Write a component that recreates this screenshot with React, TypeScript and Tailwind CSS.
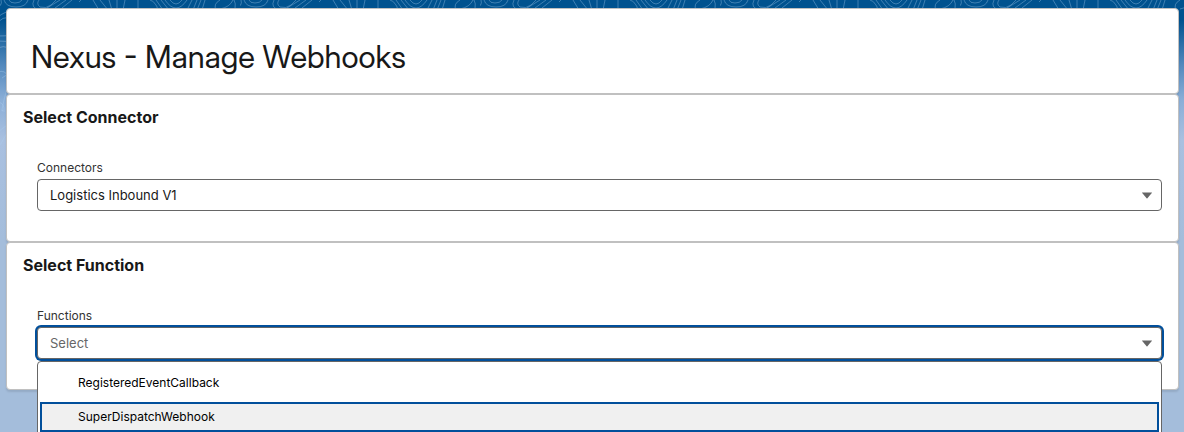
import { useState } from 'react'

const connectors = ['Logistics Inbound V1']
const functions = ['RegisteredEventCallback', 'SuperDispatchWebhook']

function Caret() {
  return (
    <svg viewBox="0 0 10 6" className="pointer-events-none absolute right-[10px] top-1/2 -mt-[3px] h-[7px] w-[10px] fill-[#666]" aria-hidden="true">
      <path d="M0.4 0H9.6Q10.3 0 9.8 0.6L5.4 5.7Q5 6.1 4.6 5.7L0.2 0.6Q-0.3 0 0.4 0Z" />
    </svg>
  )
}

// Topographic lines behind the page header
function BrandBand() {
  return (
    <svg className="absolute inset-0 h-[160px] w-full" aria-hidden="true">
      <defs>
        <pattern id="topo" width="240" height="160" patternUnits="userSpaceOnUse">
          <g fill="none" stroke="#a9cdf0" strokeOpacity="0.36">
            <path d="M9 0Q10 3 15 3T22 0M4 0Q6 7 16 7T28 0M39 0Q36 4 40 7Q46 9 51 5L56 0M34 0Q30 8 40 10M47 8L60 0M55 8L66 0M62 8L72 0M81 0L79 2M93 0L99 10M100 0L108 10M109 0L112 10M117 0V10M125 0L123 10M138 0V10M150 0Q156 2 158 10M156 0L163 10M161 0L169 10M165 0Q176 16 187 0M170 0Q176 8 182 0M192 0L187 10M197 0L193 10M201 0L197 10M205 0L202 10M216 10Q213 4 220 0M220 9Q230 7 233 0M-5 9Q3 6 1 0M235 9Q236 3 234 0" />
            <path d="M-2 22Q8 12 18 24T-2 36M-2 17Q13 4 23 24T-2 41M-2 48Q9 43 14 56T2 78M-2 72Q12 68 6 92T3 110M-2 102Q5 103 4 112M-2 132Q5 126 12 122M0 145L10 128M224 20Q234 12 242 24M226 48Q234 34 240 40M228 64L238 76M226 92Q240 90 240 102" />
          </g>
        </pattern>
      </defs>
      <rect width="100%" height="160" fill="url(#topo)" />
    </svg>
  )
}

function Card({ title, children }: { title: string, children: React.ReactNode }) {
  return (
    <section className="rounded-[4px] border border-[#c0c0c0] bg-white px-4 pb-[30px] pt-3 shadow-[0_2px_2px_rgba(0,0,0,0.1)]">
      <h2 className="text-base font-bold leading-5">{title}</h2>
      <div className="pl-[14px] pt-8">{children}</div>
    </section>
  )
}

export default function App() {
  const [connector, setConnector] = useState(connectors[0])
  const [selected, setSelected] = useState('')
  const [active, setActive] = useState(1)
  const [open, setOpen] = useState(true)

  return (
    <div className="relative min-h-screen overflow-hidden bg-[#a4bddb] bg-[linear-gradient(to_bottom,#00528f_0px,#00528f_20px,#5389bd_65px,#8aaed7_100px,#a9c0e0_140px,#a4bddb_240px)] font-[Inter,sans-serif] text-[#181818]">
      <BrandBand />
      <main className="relative pb-[42px] pl-[6px] pr-[5px] pt-2">
        <header className="rounded-[4px] border border-[#c0c0c0] bg-white px-6 pb-4 pt-7 shadow-[0_2px_2px_rgba(0,0,0,0.1)]">
          <h1 className="font-['Inter_Display',Inter,sans-serif] text-[31px] leading-10">Nexus - Manage Webhooks</h1>
        </header>

        <Card title="Select Connector">
          <label htmlFor="connector" className="block text-xs leading-[18px] text-[#333]">Connectors</label>
          <div className="relative mt-[2px]">
            <select
              id="connector"
              value={connector}
              onChange={e => setConnector(e.target.value)}
              className="block h-8 w-full appearance-none rounded-[4px] border border-[#666] bg-white px-3 pt-[2px] text-[13px] outline-none"
            >
              {connectors.map(name => <option key={name}>{name}</option>)}
            </select>
            <Caret />
          </div>
        </Card>

        <Card title="Select Function">
          <label htmlFor="function" className="block text-xs leading-[18px] text-[#333]">Functions</label>
          <div className="relative mt-[2px]">
            <button
              id="function"
              type="button"
              role="combobox"
              aria-expanded={open}
              aria-controls="function-list"
              onClick={() => setOpen(!open)}
              className={`block h-8 w-full rounded-[4px] border border-[#666] bg-white px-3 pt-[2px] text-left text-[13px] ${selected ? '' : 'text-[#666]'} ${open ? 'shadow-[0_0_0_2px_#014f9b]' : ''}`}
            >
              {selected || 'Select'}
            </button>
            <Caret />
            {open && (
              <ul
                id="function-list"
                role="listbox"
                aria-label="Functions"
                className="absolute inset-x-0 top-full mt-[2px] flex flex-col gap-[2px] rounded-[4px] border border-[#666] bg-white px-[2px] py-1 text-xs text-black"
              >
                {functions.map((name, i) => (
                  <li
                    key={name}
                    role="option"
                    aria-selected={name === selected}
                    onMouseEnter={() => setActive(i)}
                    onClick={() => { setSelected(name); setOpen(false) }}
                    className={`flex cursor-pointer items-center border-2 pl-9 ${i === active ? 'h-[30px] border-[#014f9b] bg-[#f0f0f0]' : 'h-[34px] border-transparent'}`}
                  >
                    {name}
                  </li>
                ))}
              </ul>
            )}
          </div>
        </Card>
      </main>
    </div>
  )
}
